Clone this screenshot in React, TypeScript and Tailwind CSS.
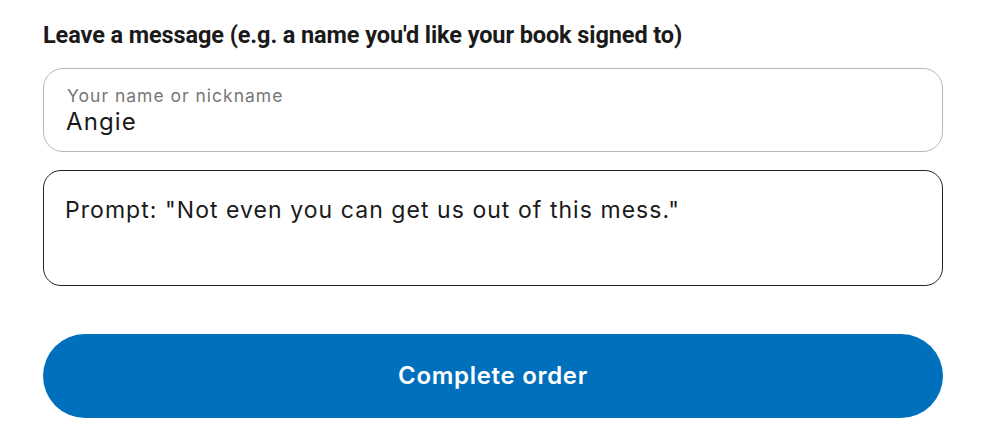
export default function App() {
  return (
    <div className="w-[998px] h-[446px] bg-white px-[43px] pt-[20px]">
      <h2
        className="text-[23.5px] font-bold leading-[30px] text-[#1a1a1a] tracking-[-0.1px]"
        style={{ fontFamily: "Roboto, 'Liberation Sans', sans-serif" }}
      >
        Leave a message (e.g. a name you'd like your book signed to)
      </h2>
      <div
        className="mt-[18px] flex flex-col gap-[18px]"
        style={{ fontFamily: "Inter, 'Open Sans', sans-serif" }}
      >
        <label className="flex h-[84px] w-[900px] flex-col justify-center rounded-[20px] border border-[#b8b8b8] px-[23px] pt-[2px]">
          <span className="text-[17.5px] leading-[22px] tracking-[1px] text-[#777777]">Your name or nickname</span>
          <span className="-ml-[1px] text-[24px] leading-[30px] tracking-[1.1px] text-[#1a1a1a]">Angie</span>
        </label>
        <div className="h-[116px] w-[900px] rounded-[18px] border border-[#222222] px-[21px] pt-[24px]">
          <p className="text-[23px] leading-[30px] tracking-[1.05px] text-[#1a1a1a]">
            Prompt: "Not even you can get us out of this mess."
          </p>
        </div>
        <button className="mt-[30px] flex h-[84px] w-[900px] items-center justify-center rounded-full bg-[#0070bd] text-[24px] font-semibold tracking-[0.7px] text-white">
          Complete order
        </button>
      </div>
    </div>
  );
}
